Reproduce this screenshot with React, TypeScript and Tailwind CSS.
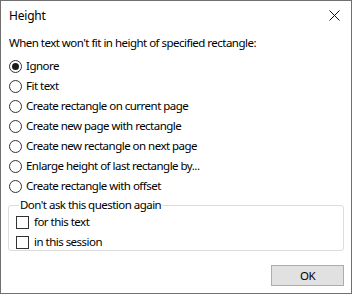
import type { ReactNode } from "react";

const options = [
  "Ignore",
  "Fit text",
  "Create rectangle on current page",
  "Create new page with rectangle",
  "Create new rectangle on next page",
  "Enlarge height of last rectangle by...",
  "Create rectangle with offset",
];

function Radio({ checked, children }: { checked?: boolean; children: ReactNode }) {
  return (
    <div className="flex h-5 items-center">
      <span className="flex h-[13px] w-[13px] items-center justify-center rounded-full border border-[#333333] bg-white">
        {checked ? <span className="h-[7px] w-[7px] rounded-full bg-[#1a1a1a]" /> : null}
      </span>
      <span className="ml-[4px]">{children}</span>
    </div>
  );
}

function Check({ children }: { children: ReactNode }) {
  return (
    <div className="flex h-5 items-center">
      <span className="h-[13px] w-[13px] border border-[#333333] bg-white" />
      <span className="ml-[5px]">{children}</span>
    </div>
  );
}

export default function App() {
  return (
    <div
      className="flex h-[294px] w-[352px] flex-col border border-[#707070] bg-white text-[11.5px] leading-none tracking-[-0.52px] text-black"
      style={{ fontFamily: '"Noto Sans", sans-serif' }}
    >
      <div className="flex h-[29px] items-center justify-between pl-[8px] pr-[10px]">
        <span className="text-[12px] tracking-[-0.2px]">Height</span>
        <svg width="11" height="11" viewBox="0 0 11 11" className="mr-[1px]">
          <path d="M0.5 0.5 L10.5 10.5 M10.5 0.5 L0.5 10.5" stroke="#111" strokeWidth="1" />
        </svg>
      </div>
      <div className="flex flex-1 flex-col px-[7px] pt-[7px]">
        <div className="h-[14px] pl-[1px]">When text won't fit in height of specified rectangle:</div>
        <div className="mt-[5px] flex flex-col pl-[1px]">
          {options.map((label, i) => (
            <Radio key={label} checked={i === 0}>
              {label}
            </Radio>
          ))}
        </div>
        <fieldset className="mt-[2px] h-[53px] rounded-[3px] border border-[#dcdcdc] pb-[2px] pl-[7px] pr-0">
          <legend className="ml-[3px] px-[1px] leading-[14px]">Don't ask this question again</legend>
          <Check>for this text</Check>
          <Check>in this session</Check>
        </fieldset>
        <div className="mt-[14px] flex justify-end">
          <button className="flex h-[21px] w-[73px] items-center justify-center border border-[#adadad] bg-[#e1e1e1]">
            OK
          </button>
        </div>
      </div>
    </div>
  );
}
